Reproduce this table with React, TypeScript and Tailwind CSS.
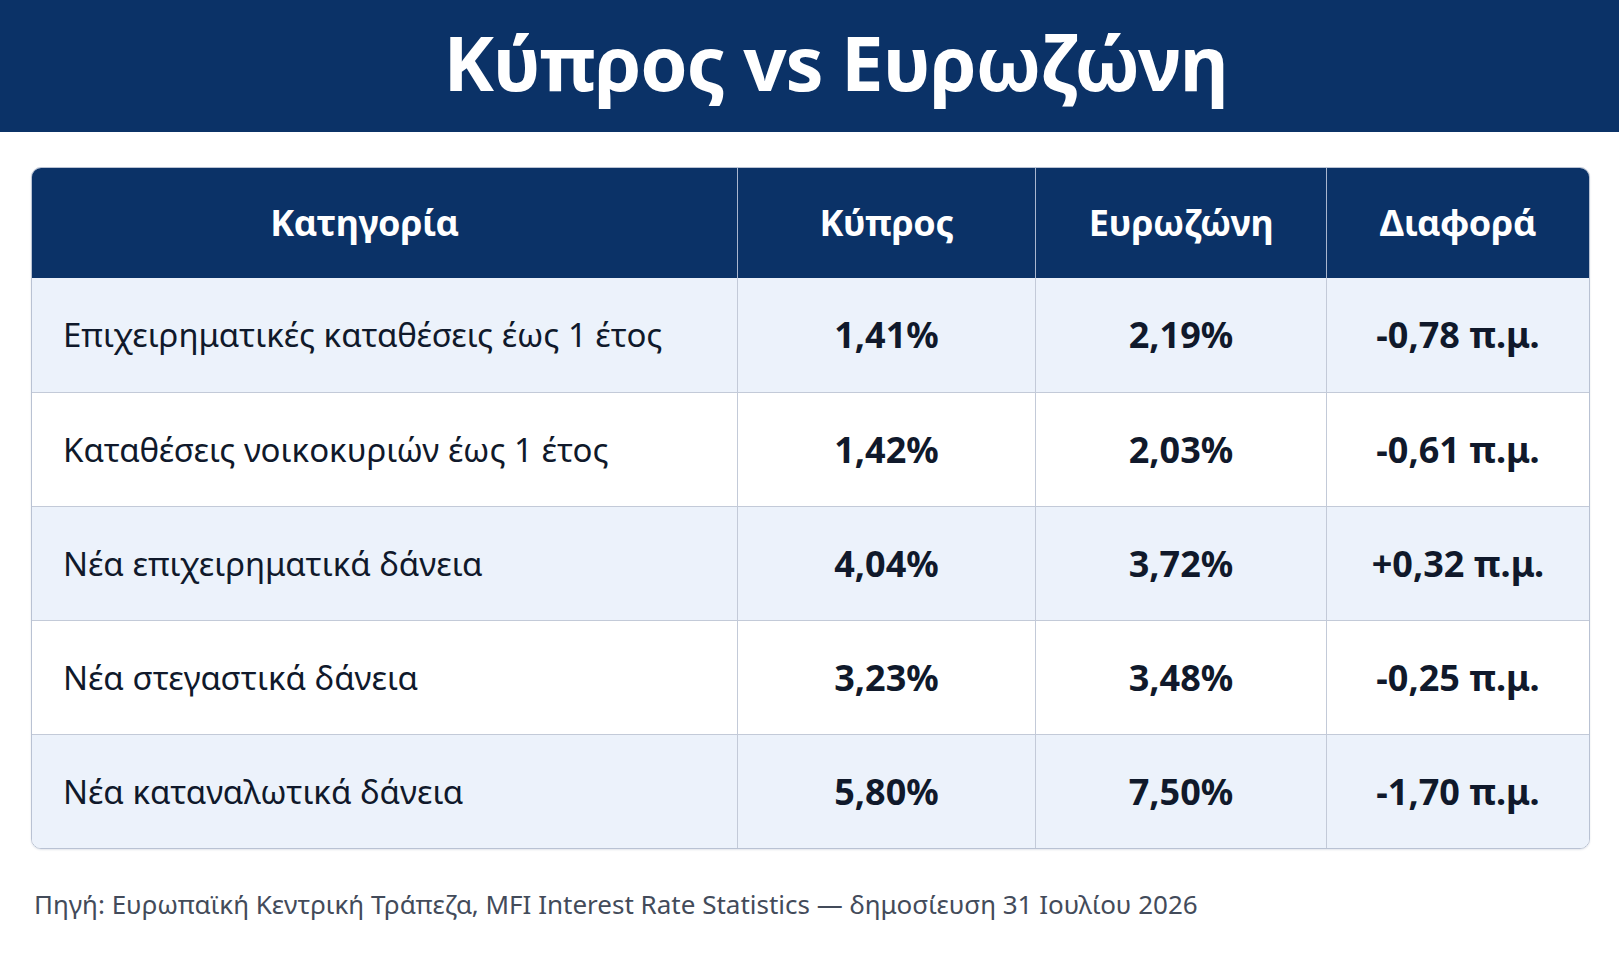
import React from "react";

const rows = [
  { label: "Επιχειρηματικές καταθέσεις έως 1 έτος", cy: "1,41%", ez: "2,19%", diff: "-0,78 π.μ." },
  { label: "Καταθέσεις νοικοκυριών έως 1 έτος", cy: "1,42%", ez: "2,03%", diff: "-0,61 π.μ." },
  { label: "Νέα επιχειρηματικά δάνεια", cy: "4,04%", ez: "3,72%", diff: "+0,32 π.μ." },
  { label: "Νέα στεγαστικά δάνεια", cy: "3,23%", ez: "3,48%", diff: "-0,25 π.μ." },
  { label: "Νέα καταναλωτικά δάνεια", cy: "5,80%", ez: "7,50%", diff: "-1,70 π.μ." },
];

const cols = "grid grid-cols-[705px_298px_291px_1fr]";

export default function App() {
  return (
    <div className="min-h-[971px] bg-white font-['Noto_Sans',sans-serif]">
      {/* Title band */}
      <div className="h-[132px] bg-[#0b3267] flex items-center justify-center pl-[52px] pb-[8px]">
        <h1 className="text-[76px] font-bold leading-none text-white tracking-[-0.015em]">Κύπρος vs Ευρωζώνη</h1>
      </div>

      {/* Table */}
      <div className="mt-[35px] ml-[31px] mr-[29px] rounded-[10px] border border-[#b9c2d3] overflow-hidden shadow-[0_1px_2px_rgba(15,40,90,0.12)]">
        <div className={`${cols} h-[110px] bg-[#0b3267] text-white text-[36px] font-bold tracking-[-0.01em]`}>
          <div className="flex items-center justify-center pr-[40px]">Κατηγορία</div>
          <div className="flex items-center justify-center border-l border-[#a9b6cf]">Κύπρος</div>
          <div className="flex items-center justify-center border-l border-[#a9b6cf]">Ευρωζώνη</div>
          <div className="flex items-center justify-center border-l border-[#a9b6cf]">Διαφορά</div>
        </div>
        {rows.map((r, i) => (
          <div
            key={r.label}
            className={`${cols} h-[114px] text-[#10192b] ${i % 2 === 0 ? "bg-[#ecf2fb]" : "bg-white"} ${i > 0 ? "border-t border-[#c3cad8]" : ""}`}
          >
            <div className="flex items-center pl-[31px] text-[33px]">{r.label}</div>
            <div className="flex items-center justify-center border-l border-[#c3cad8] text-[36px] font-bold">{r.cy}</div>
            <div className="flex items-center justify-center border-l border-[#c3cad8] text-[36px] font-bold">{r.ez}</div>
            <div className="flex items-center justify-center border-l border-[#c3cad8] text-[36px] font-bold">{r.diff}</div>
          </div>
        ))}
      </div>

      {/* Source */}
      <p className="mt-[36px] ml-[34px] text-[26px] text-[#434b5a]">
        Πηγή: Ευρωπαϊκή Κεντρική Τράπεζα, MFI Interest Rate Statistics — δημοσίευση 31 Ιουλίου 2026
      </p>
    </div>
  );
}
